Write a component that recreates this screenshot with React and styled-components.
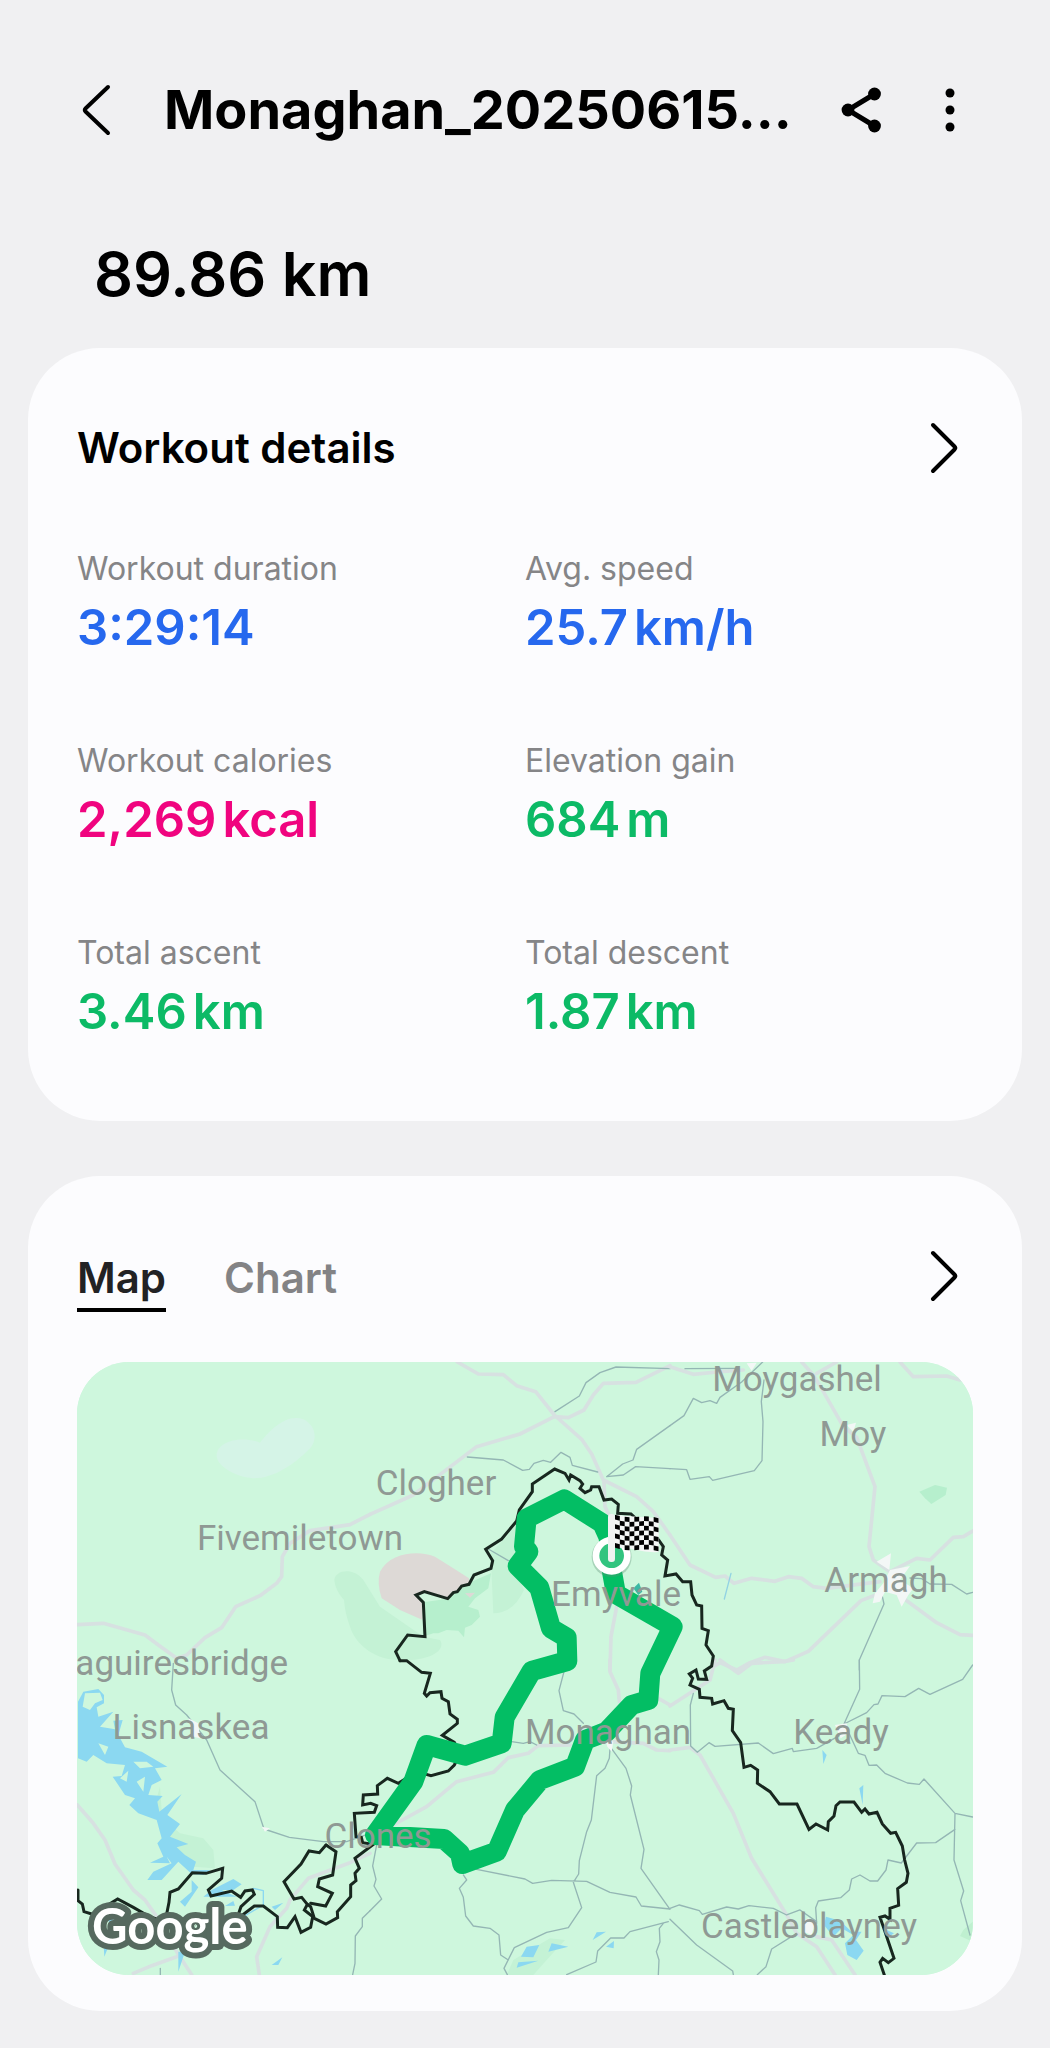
import React, { useState } from 'react';
import styled, { createGlobalStyle } from 'styled-components';

const GlobalStyle = createGlobalStyle`
  *, *::before, *::after { box-sizing: border-box; }
  body {
    margin: 0;
    background: #f0f0f2;
    color: #000;
    font-family: Inter, 'Liberation Sans', sans-serif;
  }
`;

const Page = styled.div`
  min-height: 100vh;
  padding: 80px 28px 36px;
`;

const Header = styled.header`
  display: flex;
  align-items: center;
  gap: 32px;
  padding: 0 44px 0 40px;
`;

const Title = styled.h1`
  flex: 1;
  min-width: 0;
  margin: 0 0 0 8px;
  font-size: 54px;
  line-height: 60px;
  font-weight: 700;
  white-space: nowrap;
`;

const IconButton = styled.button`
  display: flex;
  align-items: center;
  justify-content: center;
  flex: none;
  width: 56px;
  height: 56px;
  padding: 0;
  border: 0;
  background: none;
  color: #000;
  cursor: pointer;
`;

const Distance = styled.p`
  margin: 98px 0 38px 66px;
  font-size: 61px;
  line-height: 72px;
  font-weight: 600;
`;

const Card = styled.section`
  padding: 72px 49px ${(p) => p.$bottom}px;
  border-radius: 72px;
  background: #fcfcfe;

  & + & { margin-top: 55px; }
`;

const CardHead = styled.div`
  display: flex;
  align-items: flex-start;
  justify-content: space-between;
`;

const CardTitle = styled.h2`
  margin: 0;
  font-size: 42px;
  line-height: 56px;
  font-weight: 600;
`;

const Stats = styled.dl`
  display: grid;
  grid-template-columns: 1fr 1fr;
  row-gap: 84px;
  margin: 72px 0 0;
`;

const Stat = styled.div`
  display: flex;
  flex-direction: column;
  gap: 10px;
`;

const StatLabel = styled.dt`
  font-size: 32px;
  line-height: 42px;
  color: #858587;
`;

const StatValue = styled.dd`
  display: flex;
  gap: 6px;
  margin: 0;
  font-size: 49px;
  line-height: 56px;
  font-weight: 600;
  color: ${(p) => p.$color};
`;

const Tabs = styled.div`
  display: flex;
  gap: 58px;
`;

const Tab = styled.button`
  padding: 0;
  border: 0;
  border-bottom: 4px solid ${(p) => (p.$active ? '#000' : 'transparent')};
  background: none;
  font-family: inherit;
  font-size: 42px;
  line-height: 60px;
  font-weight: 600;
  color: ${(p) => (p.$active ? '#222224' : '#838385')};
  cursor: pointer;
`;

const MapFrame = styled.div`
  margin-top: 50px;
  border-radius: 52px;
  overflow: hidden;
  background: #cef7dd;

  svg { display: block; width: 100%; height: auto; }
`;

const PlaceName = styled.text`
  font-family: Roboto, 'Liberation Sans', sans-serif;
  font-size: 35px;
  fill: #8f9994;
`;

const MapBrand = styled.text`
  font-family: Lato, 'Liberation Sans', sans-serif;
  font-size: 49px;
  font-weight: 700;
  fill: #fff;
  stroke: #56695f;
  stroke-width: 12px;
  stroke-linejoin: round;
  paint-order: stroke;
`;

const Chevron = ({ left }) => (
  <svg width="30" height="52" viewBox="0 0 30 52" fill="none" stroke="currentColor" strokeWidth="4" strokeLinecap="round" strokeLinejoin="round" aria-hidden="true">
    <path d={left ? 'M27 3 4.500 24.500Q3 26 4.500 27.500L27 49' : 'M3 3 24.500 24.500Q26 26 24.500 27.500L3 49'} />
  </svg>
);

const ShareIcon = () => (
  <svg width="44" height="48" viewBox="0 0 44 48" aria-hidden="true">
    <path d="M34.500 8 8 24 34.500 40" fill="none" stroke="currentColor" strokeWidth="5" />
    <circle cx="34.500" cy="8" r="6.400" />
    <circle cx="8" cy="24" r="6.400" />
    <circle cx="34.500" cy="40" r="6.400" />
  </svg>
);

const MoreIcon = () => (
  <svg width="12" height="48" viewBox="0 0 12 48" aria-hidden="true">
    <circle cx="6" cy="7" r="4.500" />
    <circle cx="6" cy="24" r="4.500" />
    <circle cx="6" cy="41" r="4.500" />
  </svg>
);

const stats = [
  { label: 'Workout duration', value: '3:29:14', color: '#2668ee' },
  { label: 'Avg. speed', value: '25.7', unit: 'km/h', color: '#2668ee' },
  { label: 'Workout calories', value: '2,269', unit: 'kcal', color: '#f0047f' },
  { label: 'Elevation gain', value: '684', unit: 'm', color: '#0cba66' },
  { label: 'Total ascent', value: '3.46', unit: 'km', color: '#0cba66' },
  { label: 'Total descent', value: '1.87', unit: 'km', color: '#0cba66' },
];

const places = [
  ['Moygashel', 797, 1391],
  ['Moy', 853, 1446],
  ['Clogher', 436, 1495],
  ['Fivemiletown', 300, 1550],
  ['Armagh', 886, 1592],
  ['Emyvale', 616, 1606],
  ['Lisnaskea', 191, 1739],
  ['Monaghan', 608, 1744],
  ['Keady', 841, 1744],
  ['Clones', 378, 1848],
  ['Castleblayney', 809, 1938],
];

// Map drawing, split in six tiles of 900 x 930 units; three units make one pixel.
const tiles = [
  {
    x: 0, y: 0,
    haze: 'M440 315C442 275 510 255 570 278C600 240 650 190 700 208C745 230 740 280 715 300C670 345 610 385 550 385C490 380 438 345 440 315Z',
    major: 'M900 493L840 524L720 542L660 580L637 620L635 680L620 700L570 737L497 770L455 833L405 863L350 915L320 925L265 885L225 855L100 820L22 824',
  },
  {
    x: 900, y: 0,
    major: 'M262 36L325 72L400 74L440 107L497 125L553 195L635 268L665 312L700 390L800 440L850 485L900 555M0 493L130 435L320 290L450 252L553 200L595 203L642 180L670 135L700 100L798 97L900 47M702 395L705 470L720 500M740 770L723 860L720 960',
    minor: 'M555 185L628 138L648 98L690 68L738 51L900 56M292 321L400 330L458 361L478 358L492 340L520 331L542 337L573 307L600 322L607 346L683 366M710 380L758 342L789 330L800 298L900 227M710 380L760 375L797 350L900 356M355 597L415 632',
  },
  {
    x: 1800, y: 0,
    major: 'M0 50L70 73L140 66L220 60M395 36L430 75L460 125L520 230L560 262L615 410L597 590L610 630L660 665L740 625L780 630L850 562L880 560L908 543M690 36L730 80L830 78L870 90M500 36L440 70M0 555L60 645L137 682L165 678L192 700L245 685L315 694L355 680L395 685L430 710L470 715L630 695M700 745L800 818L870 854L908 856M635 728L573 752L415 904L345 935L285 922L240 938L200 960L150 938L130 950',
    minor: 'M45 56L200 55M278 36L215 96L150 142L140 160L120 152L95 158L70 145L42 197L0 227M282 90L274 155L279 215L276 332L253 362L128 391L118 380L60 388L50 359L0 356M720 684L755 686L780 702L845 703L890 732L908 727M635 730L642 762L568 930L568 960',
    river: 'M183 670L163 747',
  },
  {
    x: 0, y: 930,
    major: 'M22 435L70 490L105 540L135 612L190 690L225 720L260 770L320 875L365 944M320 890L245 917L190 940M900 580L840 608L715 655L660 720L650 745L600 800L560 890L568 944',
    minor: 'M310 10L305 90L317 135L350 165L410 240L450 330L555 425L582 507L658 532L760 545L830 545L900 520M900 752L877 775L877 800L856 828L855 910L848 944M271 925L271 944',
  },
  {
    x: 900, y: 930,
    major: 'M0 545L75 492L170 440L260 365L370 337L415 293L475 280L505 257L600 255M720 0L720 35L745 90L748 125M640 210L720 245L820 250L860 270L900 272M865 115L900 135',
    minor: 'M582 35L567 92L580 152L612 162L640 190M425 245L460 250L480 245L500 255M720 265L718 295L705 325L680 347L664 480L650 515L628 602L626 642L610 667L635 743L595 803L530 817L433 863L402 925L412 944M722 262L768 325L785 378L781 405L822 568L813 625L900 748M320 628L465 657L488 670L545 661L650 664L720 697L798 711L814 738L900 747M280 645L290 660L268 685L280 712L287 768L310 798L360 805L387 825L392 885L415 900M20 555L8 618L18 658L12 678L35 717L0 752M895 785L780 815L762 834L722 834L683 873L678 906L590 944M880 790L868 805L870 845L859 875L867 900L865 944',
  },
  {
    x: 1800, y: 930,
    major: 'M0 138L120 60L135 0M150 0L205 40L245 10L340 5L370 0M0 270L60 262L90 285L190 460L245 595L350 765L380 820L440 860L495 944M440 830L485 840L555 944',
    minor: 'M70 100L61 135L62 258L82 277L117 248L135 259L265 249L310 281L367 265L370 275L440 265L520 220M568 0L569 88L522 192L590 158L612 134L624 132L636 107L705 110L746 85L780 103L878 58L908 15M530 205L565 280L585 286L597 316L620 315L645 340L712 369L748 373L762 357L855 460L908 471M855 460L852 600L881 693L872 722L900 825M855 508L797 548L740 549L694 609L654 600L648 630L623 663L600 663L570 645L545 657L538 690L512 713L445 723L437 743L440 790M0 745L28 735L88 752L97 763L170 741L205 747L237 737L310 745L350 765L390 750L440 785M380 820L305 867L288 920L262 944M0 778L80 855L188 933L190 944',
  },
];

const border = [
  'M990 932L977 905L1013 855L1065 860L1060 757L1038 735L1063 725L1133 746L1150 728L1162 725L1175 708L1197 703L1212 675L1263 655L1268 632L1247 598L1295 567L1340 513L1348 480L1387 425L1387 402L1454 357L1485 370L1497 390L1502 375L1530 392L1538 402L1530 415L1545 428L1562 420L1565 410L1587 410L1602 450L1625 447L1645 463L1643 490L1683 492L1766 570L1780 590L1775 615L1793 630L1785 678L1818 672L1838 695L1862 695L1866 735L1880 765L1895 768L1896 835L1915 842L1908 885L1930 918L1925 948L1903 963L1910 988L1885 987L1878 960L1858 972L1868 985L1860 1005L1888 1018L1890 1042L1925 1045L1928 1062L1962 1052L1975 1075L1990 1078L1987 1142L2012 1178L2022 1252L2042 1246L2063 1260L2062 1300L2100 1325L2128 1362L2181 1362L2217 1438L2238 1422L2273 1440L2275 1415L2292 1398L2298 1367L2310 1356L2352 1356L2375 1387L2385 1377L2397 1392L2421 1387L2437 1422L2462 1450L2477 1447L2497 1488L2504 1530L2514 1570L2509 1597L2483 1616L2486 1666L2460 1675L2460 1708L2445 1698L2430 1702L2440 1730L2472 1825L2455 1838L2438 1825L2430 1837L2443 1875',
  'M990 932L1010 932L1055 967L1081 970L1063 1030L1070 1038L1080 1028L1113 1025L1116 1045L1135 1055L1140 1092L1162 1108L1162 1120L1117 1156L1153 1177L1170 1210L1153 1245L1135 1263L1083 1277L1040 1265L985 1300L952 1285L922 1307L923 1332L880 1335L878 1365L902 1360L920 1367L913 1387L853 1390L858 1460L874 1462L878 1478L910 1483L855 1525L868 1555L855 1570L858 1592L842 1605L842 1640L802 1685L803 1703L768 1722L733 1705L722 1670L712 1663',
  'M768 1485L748 1508L717 1503L693 1542L642 1595L672 1647L695 1642L712 1663L703 1680L728 1700L722 1732L693 1747L675 1700L652 1733L623 1732L622 1700L580 1668L553 1668L500 1708L513 1670L553 1633L547 1620L525 1623L512 1642L485 1623L423 1638L415 1620L455 1585L458 1555L408 1570L367 1568L325 1617L300 1627L297 1657L290 1692L262 1708L235 1698L190 1672L143 1647L105 1670L75 1695L42 1685L37 1662L24 1652L24 1620',
  'M768 1485L798 1505L788 1575L748 1587L743 1610L787 1630L767 1668L722 1660',
];

const routePath = 'M1625 617L1615 560L1597 520L1483 448L1370 505L1362 590L1375 605L1343 648L1408 713L1443 835L1490 863L1492 933L1385 963L1304 1102L1295 1180L1185 1217L1070 1185L1030 1295L915 1455L1122 1467L1170 1510L1177 1542L1280 1505L1335 1380L1410 1290L1515 1250L1545 1170L1610 1145L1685 1065L1735 1050L1741 970L1808 830L1638 732L1625 660';

// Flag cells: each column drops a little, following the ripple of the cloth.
const rippleAt = (x) => 494 + (x - 1635) / 11 + 4 * Math.sin((x - 1635) / 22);
const flagCells = [];
for (let c = 0; c < 9; c += 1) {
  for (let r = 0; r < 7; r += 1) {
    if ((c + r) % 2 === 0) {
      const left = 1635 + c * 14.5;
      const right = left + 14.5;
      const a = rippleAt(left) + r * 14.2;
      const b = rippleAt(right) + r * 14.2;
      flagCells.push(<path key={`${c}-${r}`} d={`M${left} ${a}L${right} ${b}V${b + 14.2}L${left} ${a + 14.2}Z`} />);
    }
  }
}

const WorkoutMap = () => (
  <svg viewBox="77 1362 896 613" role="img" aria-label="Route map around Monaghan">
    <rect x="77" y="1362" width="896" height="613" fill="#cef7dd" />
    <g transform="translate(70 1350) scale(0.33333)" fill="none" strokeLinejoin="round" strokeLinecap="round">
      <g fill="#c4f2d5">
        <path d="M793 690C795 660 850 650 880 690L930 770L1060 860L1110 870C1130 900 1080 935 990 930C920 930 860 890 840 830Q825 790 822 750Q795 720 793 690Z" />
        <path d="M1262 610L1310 560L1340 520L1350 600L1330 650L1362 720Q1330 790 1270 790Z" />
        <path d="M270 1310L250 1380L330 1450L400 1465L430 1500L435 1555L370 1550L280 1450Z" />
        <path d="M1330 1830L1440 1765L1485 1770L1430 1830L1390 1875L1310 1875Z" />
      </g>
      <path d="M1058 860L1060 757L1133 746L1175 708L1263 670L1255 715L1215 745L1195 770L1225 780L1230 800L1205 825L1185 833L1182 862L1165 842L1130 840L1105 850L1090 850Z" fill="#b6efcd" />
      <path d="M930 665C960 605 1050 600 1095 620L1150 655L1197 685L1197 703L1175 708L1133 746L1063 725L1038 735L1058 757V810L990 780L935 745Q920 700 930 665Z" fill="#ddd9d6" />
      <path d="M1185 730L1215 728L1200 743Z" fill="#ddd9d6" />
      <path d="M2548 425L2595 405L2631 413L2627 435L2584 462L2565 445Z" fill="#b6efcd" />
      <path d="M2708 1715L2680 1740L2670 1758L2708 1775Z" fill="#bff0d0" />

      {tiles.map((t) => (
        <g key={`${t.x}-${t.y}`} transform={`translate(${t.x} ${t.y})`}>
          {t.haze && <path d={t.haze} fill="#d5f4e7" />}
          <path d={t.major} stroke="#d7e1e1" strokeWidth="11" />
          {t.minor && <path d={t.minor} stroke="#94b6b4" strokeWidth="4" />}
          {t.river && <path d={t.river} stroke="#92d3e3" strokeWidth="4" />}
        </g>
      ))}

      <g fill="#f3f7f6">
        <path d="M2420 635L2463 610L2458 660ZM2460 660L2520 648L2490 690L2530 715L2515 735L2495 770L2480 735L2445 725L2430 755L2408 760L2415 730L2440 700ZM2030 40L2060 38L2045 62ZM2330 225L2358 218L2350 245Z" />
        <path d="M355 1105L385 1120L390 1165L370 1160ZM575 1430L600 1435L585 1445ZM1605 1165L1630 1175L1625 1205L1612 1190ZM2295 1125L2330 1120L2335 1150L2312 1165ZM2195 1715L2215 1705L2235 1720L2225 1755L2200 1745Z" />
      </g>

      <g fill="#8bd8f1">
        <path fillRule="evenodd" d="M24 1055L40 1025L85 1017L102 1035V1060L80 1072L85 1100L130 1085L90 1130L135 1138L130 1112L158 1110L145 1155L165 1192L215 1205L292 1250L255 1255L275 1290L245 1305L235 1335L278 1338L262 1355L268 1385L335 1332L292 1395L330 1422L300 1460L355 1482L320 1492L345 1515L378 1535L370 1560L420 1560L400 1575L365 1572L325 1535L275 1590L232 1590L250 1565L305 1540L290 1520L300 1540L240 1538L280 1520L262 1480L275 1465L260 1410L205 1390L178 1365L195 1345L165 1335L128 1280L155 1278L165 1245L110 1240L70 1215L50 1235L24 1225ZM45 1030L90 1028L98 1050L75 1060L60 1080L38 1070ZM85 1180L115 1190L105 1215ZM150 1285L175 1262L170 1295ZM200 1295L225 1280L220 1325ZM190 1235L230 1235L250 1250L210 1255Z" />
        <path d="M365 1590L385 1612L345 1670L330 1655L365 1625ZM490 1587L515 1603L490 1620L455 1620L500 1640L400 1640L425 1620ZM465 1668L490 1653L495 1667ZM605 1670L640 1658L615 1680ZM605 1845L637 1822L625 1845ZM325 1805L345 1805L325 1865ZM100 1770L115 1790L103 1820ZM115 1710L130 1705L125 1745Z" />
        <path d="M1353 1820L1370 1790L1408 1785L1390 1822ZM1345 1837L1405 1832L1340 1853ZM1445 1780L1495 1790L1435 1805ZM1580 1747L1608 1745L1568 1770ZM1608 1790L1632 1773L1631 1795ZM2257 1200L2270 1215L2260 1242ZM2368 1315L2380 1305L2378 1365ZM2268 1700L2310 1712L2345 1745L2375 1745L2358 1770L2381 1802L2360 1830L2332 1815L2325 1780L2350 1755L2315 1735L2290 1760L2262 1725ZM2450 1740L2472 1750L2455 1762Z" />
      </g>
      <path d="M550 1615L580 1622V1665L520 1700" stroke="#8bd8f1" strokeWidth="4" />

      {border.map((d) => (
        <path key={d} d={d} stroke="#18271f" strokeWidth="9" strokeLinejoin="miter" />
      ))}
      <path d={routePath} stroke="#03be64" strokeWidth="60" />
      <path d="M1690 715L1707 698L1717 725L1705 735Z" fill="#3ab9a4" />
    </g>

    {places.map(([name, x, y]) => (
      <PlaceName key={name} x={x} y={y} textAnchor="middle">{name}</PlaceName>
    ))}
    <PlaceName x="288" y="1675" textAnchor="end">Maguiresbridge</PlaceName>

    <g transform="translate(70 1350) scale(0.33333)">
      <circle cx="1625" cy="621" r="60" fill="#5f8f75" opacity="0.35" />
      <circle cx="1625" cy="617" r="47" fill="#32c47f" stroke="#fff" strokeWidth="20" />
      <path d="M1635 494Q1660 498 1700 500T1766 504V606Q1730 608 1700 600T1635 594Z" fill="#f4f6f5" />
      {flagCells}
      <rect x="1614" y="492" width="21" height="144" rx="9" fill="#f0f2f1" />
    </g>
    <MapBrand x="92" y="1944">Google</MapBrand>
  </svg>
);

export default function App() {
  const [tab, setTab] = useState('Map');
  return (
    <>
      <GlobalStyle />
      <Page>
        <Header>
          <IconButton type="button" aria-label="Back"><Chevron left /></IconButton>
          <Title>Monaghan_20250615...</Title>
          <IconButton type="button" aria-label="Share"><ShareIcon /></IconButton>
          <IconButton type="button" aria-label="More options"><MoreIcon /></IconButton>
        </Header>
        <main>
          <Distance>89.86 km</Distance>
          <Card $bottom={81}>
            <CardHead>
              <CardTitle>Workout details</CardTitle>
              <IconButton type="button" aria-label="Open workout details"><Chevron /></IconButton>
            </CardHead>
            <Stats>
              {stats.map((s) => (
                <Stat key={s.label}>
                  <StatLabel>{s.label}</StatLabel>
                  <StatValue $color={s.color}>
                    <span>{s.value}</span>
                    {s.unit && <span>{s.unit}</span>}
                  </StatValue>
                </Stat>
              ))}
            </Stats>
          </Card>
          <Card $bottom={36}>
            <CardHead>
              <Tabs role="tablist">
                {['Map', 'Chart'].map((name) => (
                  <Tab key={name} type="button" role="tab" aria-selected={tab === name} $active={tab === name} onClick={() => setTab(name)}>
                    {name}
                  </Tab>
                ))}
              </Tabs>
              <IconButton type="button" aria-label="Open map"><Chevron /></IconButton>
            </CardHead>
            <MapFrame><WorkoutMap /></MapFrame>
          </Card>
        </main>
      </Page>
    </>
  );
}
